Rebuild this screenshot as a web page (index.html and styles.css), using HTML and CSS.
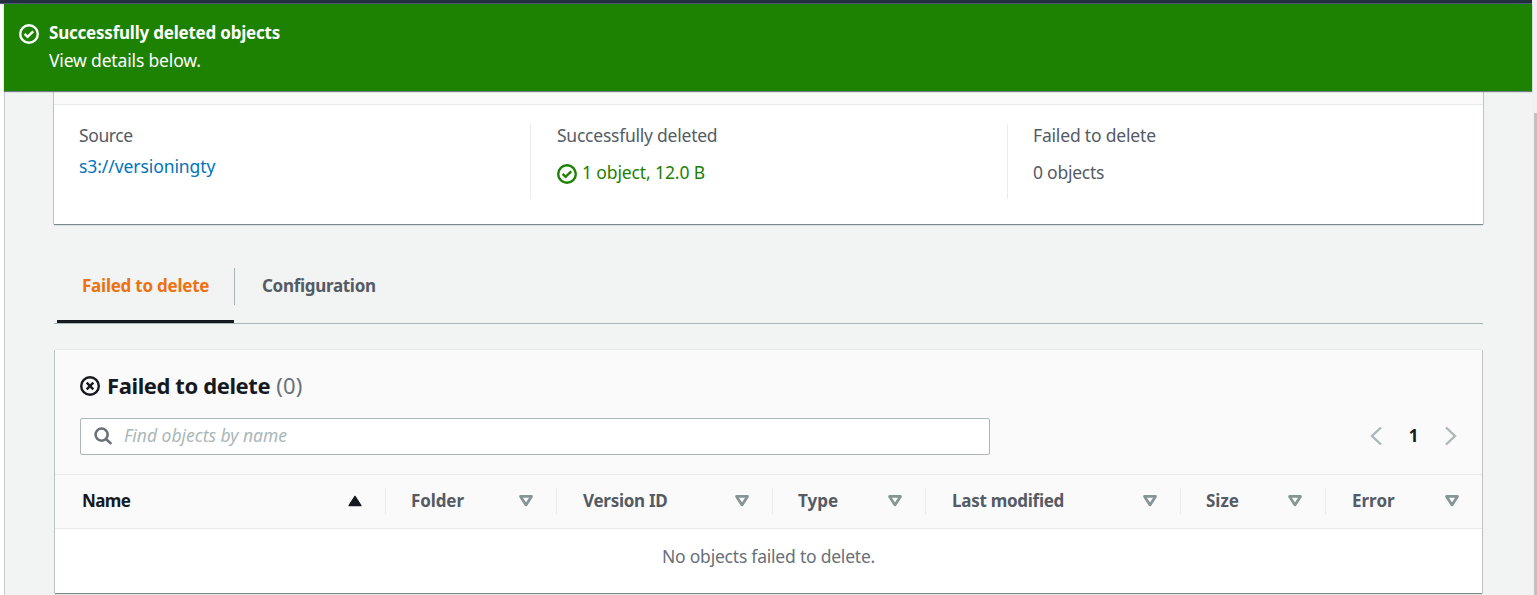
FILE: index.html
```html
<!DOCTYPE html>
<html lang="en">
<head>
<meta charset="utf-8">
<title>Delete objects: status</title>
<link rel="stylesheet" href="styles.css">
</head>
<body>
<div class="topbar"></div>
<div class="shell">
  <div class="main">
    <header class="flash">
      <svg class="icon" viewBox="0 0 20 20"><circle cx="10" cy="10" r="8.8"/><path d="M5.6 9.8l3 3 5.6-5.4"/></svg>
      <div class="flash-text">
        <strong class="t-flash">Successfully deleted objects</strong>
        <span class="t-view">View details below.</span>
      </div>
    </header>
    <main class="content">
      <section class="panel summary">
        <div class="summary-head"></div>
        <div class="summary-cols">
          <div class="col"><span class="label t-source">Source</span><a class="link">s3://versioningty</a></div>
          <div class="col"><span class="label">Successfully deleted</span>
            <span class="value ok"><svg class="icon" viewBox="0 0 20 20"><circle cx="10" cy="10" r="8.8"/><path d="M5.6 9.8l3 3 5.6-5.4"/></svg><span class="t-object">1 object, 12.0 B</span></span></div>
          <div class="col"><span class="label t-failed">Failed to delete</span><span class="value t-zero">0 objects</span></div>
        </div>
      </section>
      <nav class="tabs">
        <div class="tab active"><span class="t-tab1">Failed to delete</span></div>
        <div class="tab"><span class="t-tab2">Configuration</span></div>
      </nav>
      <section class="panel results">
        <div class="results-head">
          <h2 class="title"><svg class="icon" viewBox="0 0 20 20"><circle cx="10" cy="10" r="8.8"/><path d="M6.7 6.7l6.6 6.6M13.3 6.7l-6.6 6.6"/></svg><span class="t-title">Failed to delete</span><span class="count">(0)</span></h2>
          <div class="tools">
            <div class="search">
              <svg class="search-icon" viewBox="0 0 20 20"><circle cx="8" cy="8" r="6.4"/><path d="M12.6 12.6l5.6 5.2"/></svg>
              <span class="placeholder">Find objects by name</span>
            </div>
            <div class="pager">
              <svg class="chevron" viewBox="0 0 12 20"><path d="M11 1.5L2 10l9 8.5"/></svg>
              <b>1</b>
              <svg class="chevron" viewBox="0 0 12 20"><path d="M1 1.5L10 10l-9 8.5"/></svg>
            </div>
          </div>
        </div>
        <div class="thead">
          <div class="th sorted"><span class="t-name">Name</span><svg class="sort" viewBox="0 0 14 12"><path d="M7 2l5.2 8H1.8z"/></svg></div>
          <div class="th"><span class="t-folder">Folder</span><svg class="sort" viewBox="0 0 14 12"><path d="M2.2 2h9.6L7 9.4z"/></svg></div>
          <div class="th wide"><span class="t-version">Version ID</span><svg class="sort" viewBox="0 0 14 12"><path d="M2.2 2h9.6L7 9.4z"/></svg></div>
          <div class="th"><span class="t-type">Type</span><svg class="sort" viewBox="0 0 14 12"><path d="M2.2 2h9.6L7 9.4z"/></svg></div>
          <div class="th wide"><span class="t-modified">Last modified</span><svg class="sort" viewBox="0 0 14 12"><path d="M2.2 2h9.6L7 9.4z"/></svg></div>
          <div class="th"><span class="t-size">Size</span><svg class="sort" viewBox="0 0 14 12"><path d="M2.2 2h9.6L7 9.4z"/></svg></div>
          <div class="th"><span class="t-error">Error</span><svg class="sort" viewBox="0 0 14 12"><path d="M2.2 2h9.6L7 9.4z"/></svg></div>
        </div>
        <div class="empty"><span class="t-empty">No objects failed to delete.</span></div>
      </section>
    </main>
  </div>
  <div class="scrollbar"><div class="thumb"></div></div>
</div>
</body>
</html>
```
FILE: styles.css
```css
* { box-sizing: border-box; }
body {
  margin: 0;
  height: 595px;
  overflow: hidden;
  background: #fff;
  color: #545b64;
  font: 17.5px/24px "Noto Sans", "Open Sans", sans-serif;
  letter-spacing: -0.24px;
}
svg { display: block; flex: none; fill: none; stroke: currentColor; }
span, strong { white-space: nowrap; }
.topbar { width: 1532px; height: 4px; background: #232f3e; border-bottom: 1px solid #4b5578; }
.shell { display: flex; height: 591px; padding-left: 4px; }
.main { width: 1528px; background: #f2f3f3; border-left: 1px solid #c3c9cb; }
.flash {
  position: relative;
  display: flex;
  gap: 10px;
  height: 87px;
  margin-left: -1px;
  padding: 17px 15px 0;
  background: #1d8102;
  color: #fff;
  box-shadow: 0 1px 1px #6f7f80;
}
.icon { width: 20px; height: 20px; stroke-width: 2.4; }
.flash .icon { margin-top: 3px; }
.flash-text { display: flex; flex-direction: column; gap: 3px; }
.t-flash { font-size: 17px; letter-spacing: -0.22px; }
.t-view { letter-spacing: -0.16px; }
.panel { background: #fff; box-shadow: 0 1px 1px #7b898b, 1px 0 0 #c8cece, -1px 0 0 #c8cece, 0 -1px 0 #e6e9e9; }
.content { padding: 0 49px; }
.summary { width: 1429px; height: 133px; }
.summary-head { height: 14px; background: #fafafa; border-bottom: 1px solid #e6eaea; }
.summary-cols { display: grid; grid-template-columns: 477px 477px 1fr; height: 94px; padding-top: 19px; }
.col { display: flex; flex-direction: column; align-items: flex-start; padding-left: 25px; border-right: 1px solid #eaeded; }
.col:nth-child(2) { padding-left: 26px; }
.col:last-child { border-right: 0; }
.label { margin-top: -1px; }
.t-source { letter-spacing: -0.4px; }
.t-failed { letter-spacing: -0.18px; }
.link { margin-top: 7px; color: #0073bb; letter-spacing: -0.08px; }
.value { display: flex; align-items: center; gap: 5px; margin-top: 13px; }
.ok { color: #1d8102; letter-spacing: -0.12px; }
.ok .icon { margin-top: 4px; }
.tabs { display: flex; width: 1429px; height: 56px; margin: 44px 0 26px; padding-left: 3px; border-bottom: 1px solid #aab7b8; font-weight: 700; font-size: 17px; }
.tab { height: 37px; padding: 6px 25px 0; border-right: 1px solid #aab7b8; }
.tab + .tab { padding-left: 27px; border: 0; }
.active { display: flex; flex-direction: column; justify-content: space-between; width: 178px; color: #ec7211; }
.active::after { content: ""; flex: none; width: 177px; height: 3px; margin: 22px 0 0 -25px; background: #16191f; }
.t-tab2 { letter-spacing: -0.3px; }
.results { width: 1427px; height: 243px; margin-left: 1px; }
.results-head { height: 125px; padding: 22px 25px 0; background: #fafafa; border-bottom: 1px solid #e6eaea; }
.title { display: flex; align-items: center; height: 28px; margin: 0 0 18px; color: #16191f; font-size: 22px; line-height: 28px; letter-spacing: -0.4px; }
.title span { margin-top: -2px; }
.title .t-title { margin-left: 7px; }
.title .count { margin-left: 6px; color: #687078; font-weight: 400; letter-spacing: 0.2px; }
.tools { display: flex; align-items: center; justify-content: space-between; }
.search { display: flex; align-items: center; width: 910px; height: 37px; padding-left: 13px; gap: 11px; background: #fff; border: 1px solid #aab7b8; border-radius: 2px; }
.search-icon { width: 19px; height: 19px; color: #687078; stroke-width: 2.7; }
.placeholder { margin-top: -4px; color: #aab7b8; font-style: italic; letter-spacing: -0.02px; }
.pager { display: flex; align-items: center; justify-content: space-between; width: 87px; margin-top: -2px; color: #16191f; font-size: 17px; }
.chevron { width: 12px; height: 20px; color: #aab7b8; stroke-width: 2.4; }
.thead { display: grid; grid-template-columns: 331px 171px 216px 153px 255px 145px 156px; align-items: center; height: 54px; padding-bottom: 1px; background: #fafafa; border-bottom: 1px solid #e6eaea; font-weight: 700; font-size: 17px; letter-spacing: 0; }
.th { display: flex; align-items: center; justify-content: space-between; height: 26px; padding: 0 22px 0 25px; border-right: 1px solid #eaeded; }
.th:first-child { padding-left: 27px; }
.th.wide { padding-left: 26px; letter-spacing: -0.27px; }
.th:last-child { padding-left: 26px; border: 0; }
.t-name { letter-spacing: -0.6px; }
.t-folder { letter-spacing: -0.1px; }
.sorted { color: #16191f; }
.sort { width: 16px; height: 14px; color: #879596; stroke-width: 2.4; stroke-linejoin: round; }
.sorted .sort { color: #16191f; fill: currentColor; stroke-width: 1.2; }
.empty { padding-top: 15px; color: #687078; text-align: center; letter-spacing: -0.22px; }
.scrollbar { width: 5px; margin-top: -4px; padding: 113px 0 0 2px; background: #f1f1f1; }
.thumb { height: 482px; background: #c1c1c1; }
```
